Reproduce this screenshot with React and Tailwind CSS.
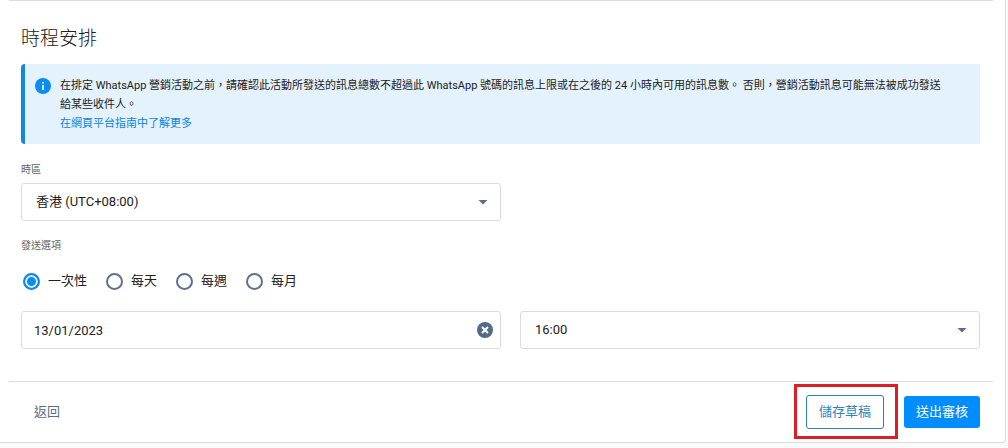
import React, { useState } from "react";

const frequencies = [
  { value: "once", label: "一次性" },
  { value: "daily", label: "每天" },
  { value: "weekly", label: "每週" },
  { value: "monthly", label: "每月" },
];

const SelectArrow = () => (
  <svg
    className="absolute right-3 top-4 w-3 h-2 pointer-events-none"
    viewBox="0 0 12 8"
    aria-hidden="true"
  >
    <path d="M1.5 1h9L6 5.5z" fill="#5b6f8c" />
  </svg>
);

const App = () => {
  const [timezone, setTimezone] = useState("hk");
  const [frequency, setFrequency] = useState("once");
  const [date, setDate] = useState("13/01/2023");
  const [time, setTime] = useState("16:00");

  return (
    <div className="bg-[#fafafa] pb-[5px] font-[Roboto,'Noto_Sans_CJK_TC',sans-serif] text-[#212121]">
      <div className="bg-white mr-[2px] pl-[9px] pr-3 border-r border-b border-[#dcdcdf] rounded-br">
        {/* Schedule */}
        <section className="border-t border-[#dcdcdf] pl-3 pr-[13px] pt-6 pb-8">
          <h2 className="text-[19px] leading-7 font-light">時程安排</h2>

          <div className="mt-[11px] flex bg-[#e3f2fd] border-l-4 border-[#1287e0] rounded-l pt-3 pb-[11px] pl-[10px] pr-8">
            <svg
              className="w-4 h-4 mt-[2px] mr-[9px] shrink-0"
              viewBox="0 0 16 16"
              aria-hidden="true"
            >
              <circle cx="8" cy="8" r="8" fill="#0a8cf5" />
              <rect x="7.2" y="4" width="1.6" height="1.6" fill="#fff" />
              <rect x="7.2" y="7" width="1.6" height="5" fill="#fff" />
            </svg>
            <div className="text-[11px] leading-[19px]">
              <p>
                在排定 WhatsApp 營銷活動之前，請確認此活動所發送的訊息總數不超過此
                WhatsApp 號碼的訊息上限或在之後的 24 小時內可用的訊息數。
                否則，營銷活動訊息可能無法被成功發送給某些收件人。
              </p>
              <a href="#guide" className="text-[#0d84dd]">
                在網頁平台指南中了解更多
              </a>
            </div>
          </div>

          <div className="mt-[19px] grid grid-cols-[24fr_23fr] gap-x-[19px]">
            <div>
              <label
                htmlFor="timezone"
                className="block text-[10px] leading-[14px] text-[#616161]"
              >
                時區
              </label>
              <div className="relative mt-[6px]">
                <select
                  id="timezone"
                  value={timezone}
                  onChange={(e) => setTimezone(e.target.value)}
                  className="block w-full h-[38px] appearance-none bg-white border border-[#dcdcdf] rounded-[3px] pl-[14px] pr-8 text-[13px]"
                >
                  <option value="hk">香港 (UTC+08:00)</option>
                </select>
                <SelectArrow />
              </div>
            </div>
          </div>

          <fieldset className="mt-[18px]">
            <legend className="text-[10px] leading-[14px] text-[#616161]">
              發送選項
            </legend>
            <div className="mt-[18px] flex gap-[19px] pl-[2px]">
              {frequencies.map((item) => (
                <label
                  key={item.value}
                  className="flex items-center gap-2 text-[13px] leading-5"
                >
                  <input
                    type="radio"
                    name="frequency"
                    value={item.value}
                    checked={frequency === item.value}
                    onChange={() => setFrequency(item.value)}
                    className="appearance-none w-[17px] h-[17px] rounded-full border-2 border-[#5b7290] bg-white checked:border-[#1287e6] checked:bg-[#0a8cf5] checked:shadow-[inset_0_0_0_2px_#e6f5ff]"
                  />
                  {item.label}
                </label>
              ))}
            </div>
          </fieldset>

          <div className="mt-5 grid grid-cols-[24fr_23fr] gap-x-[19px]">
            <div className="relative">
              <input
                type="text"
                aria-label="日期"
                value={date}
                onChange={(e) => setDate(e.target.value)}
                className="block w-full h-[38px] bg-white border border-[#dcdcdf] rounded-[3px] pl-3 pr-8 text-[13px] leading-4"
              />
              <button
                type="button"
                aria-label="清除日期"
                onClick={() => setDate("")}
                className="absolute right-2 top-[11px]"
              >
                <svg className="w-4 h-4" viewBox="0 0 16 16" aria-hidden="true">
                  <circle cx="8" cy="8" r="8" fill="#536b8a" />
                  <path
                    d="M5 5l6 6M11 5l-6 6"
                    stroke="#fff"
                    strokeWidth="2"
                  />
                </svg>
              </button>
            </div>
            <div className="relative">
              <select
                aria-label="時間"
                value={time}
                onChange={(e) => setTime(e.target.value)}
                className="block w-full h-[38px] appearance-none bg-white border border-[#dcdcdf] rounded-[3px] pl-[14px] pr-8 text-[13px]"
              >
                <option value="16:00">16:00</option>
              </select>
              <SelectArrow />
            </div>
          </div>
        </section>

        {/* Actions */}
        <footer className="border-t border-[#dcdcdf] flex items-center justify-between pl-[25px] pr-[13px] py-[13px]">
          <button type="button" className="text-[13px] text-[#5b6b80]">
            返回
          </button>
          <div className="flex items-center gap-5">
            <div className="relative">
              <button
                type="button"
                className="block h-[34px] px-3 border border-[#2b82ae] rounded-[3px] text-[13px] text-[#2f83bd] bg-white"
              >
                儲存草稿
              </button>
              <span className="absolute -top-[11px] -bottom-[10px] -left-3 -right-[14px] border-3 border-[#dc1f26] pointer-events-none"></span>
            </div>
            <button
              type="button"
              className="h-8 px-3 rounded-[3px] text-[13px] text-white bg-[#008dff]"
            >
              送出審核
            </button>
          </div>
        </footer>
      </div>
    </div>
  );
};

export default App;
